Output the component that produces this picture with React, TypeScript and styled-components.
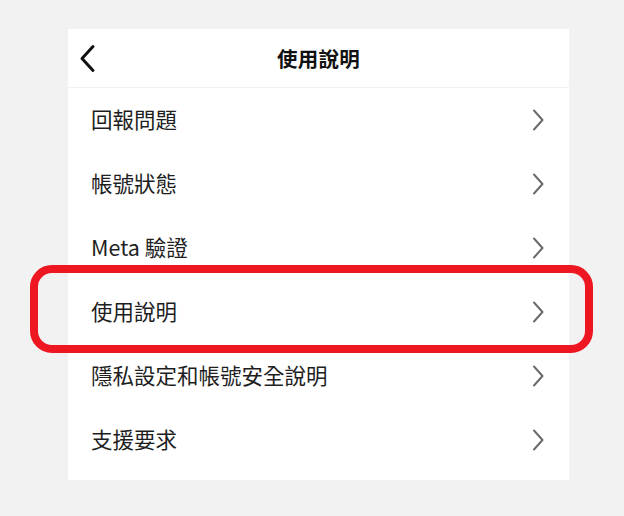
import styled, { createGlobalStyle } from "styled-components";

const GlobalStyle = createGlobalStyle`
  html, body {
    margin: 0;
    padding: 0;
    background: #f2f2f2;
  }
  body {
    font-family: "Noto Sans CJK TC", "Noto Sans", sans-serif;
    color: #1c1c1c;
  }
`;

const items = [
  "回報問題",
  "帳號狀態",
  "Meta 驗證",
  "使用說明",
  "隱私設定和帳號安全說明",
  "支援要求",
];

const App = () => {
  return (
    <>
      <GlobalStyle />
      <Page>
        <Panel>
          <Header>
            <BackButton aria-label="back">
              <svg width="17" height="29" viewBox="0 0 17 29" fill="none">
                <path
                  d="M14 2.5 L3 14.5 L14 26.5"
                  stroke="#111"
                  strokeWidth="3"
                  strokeLinecap="round"
                  strokeLinejoin="round"
                />
              </svg>
            </BackButton>
            <Title>使用說明</Title>
          </Header>
          <List>
            {items.map((label, i) => (
              <Row key={label}>
                <Label>{label}</Label>
                <svg width="12" height="22" viewBox="0 0 12 22" fill="none">
                  <path
                    d="M2 1.5 L10.5 11 L2 20.5"
                    stroke="#6b6b6b"
                    strokeWidth="2"
                    strokeLinecap="round"
                    strokeLinejoin="round"
                  />
                </svg>
                {i === 3 && <Highlight />}
              </Row>
            ))}
          </List>
        </Panel>
      </Page>
    </>
  );
};
export default App;

const Page = styled.div`
  width: 624px;
  height: 516px;
  padding: 29px 0 0 68px;
  box-sizing: border-box;
  overflow: hidden;
`;

const Panel = styled.div`
  width: 501px;
  background: #ffffff;
  padding-bottom: 8px;
`;

const Header = styled.div`
  position: relative;
  height: 58px;
  border-bottom: 1px solid #f1f1f1;
  display: flex;
  align-items: center;
  justify-content: center;
`;

const BackButton = styled.div`
  position: absolute;
  left: 11px;
  top: 15px;
  display: flex;
`;

const Title = styled.div`
  font-size: 20.5px;
  font-weight: 700;
  color: #111;
  letter-spacing: 0.3px;
  margin-top: -1px;
`;

const List = styled.div`
  display: flex;
  flex-direction: column;
`;

const Row = styled.div`
  position: relative;
  height: 64px;
  display: flex;
  align-items: center;
  justify-content: space-between;
  padding: 0 25px 0 23px;
`;

const Label = styled.div`
  font-size: 21.5px;
  line-height: 1.2;
  color: #1e1e1e;
  margin-top: -3px;
`;

const Highlight = styled.div`
  position: absolute;
  left: -38px;
  right: -24px;
  top: -15px;
  bottom: -9px;
  border: 8px solid #ee1620;
  border-radius: 22px;
  pointer-events: none;
`;
